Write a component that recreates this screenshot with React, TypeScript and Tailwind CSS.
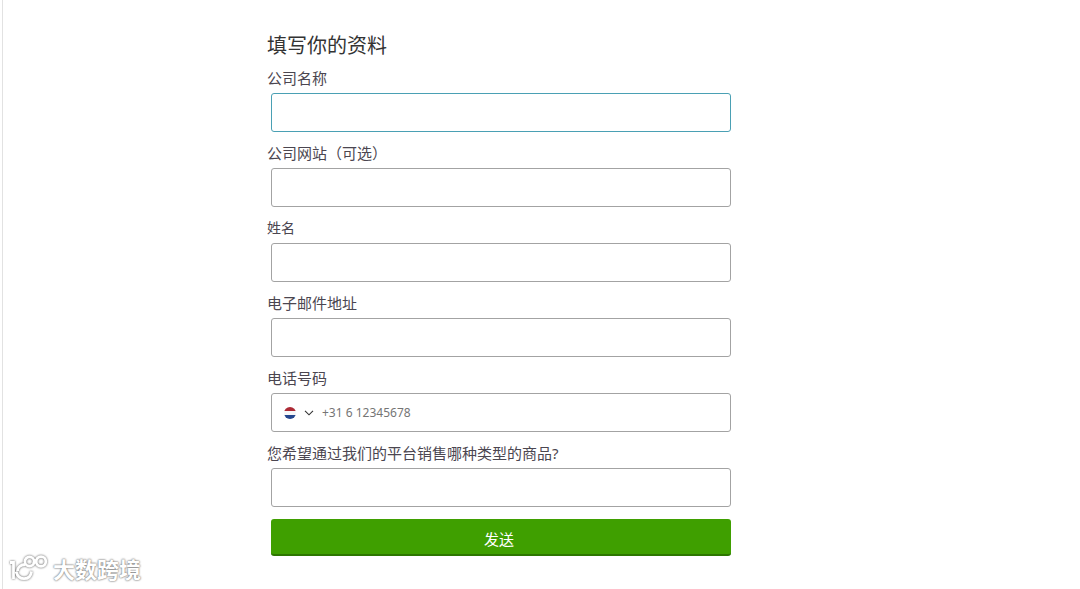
import { useState } from "react";

const cjk = "font-['Noto_Sans','Noto_Sans_CJK_SC',sans-serif]";

const inputClass =
  "block h-[39px] w-full rounded-[3px] border bg-white px-3 text-[15px] text-[#333] outline-none focus:border-[#4aa0b4]";

type FieldProps = {
  id: string;
  label: string;
  small?: boolean;
  active?: boolean;
};

function FieldLabel({ id, label, small }: FieldProps) {
  return (
    <label
      htmlFor={id}
      className={`block pt-[11px] pb-[5px] leading-5 text-[#4b4650] ${small ? "text-[14px]" : "text-[15px]"}`}
    >
      {label}
    </label>
  );
}

function Field(props: FieldProps) {
  return (
    <div>
      <FieldLabel {...props} />
      <div className="pl-1">
        <input
          id={props.id}
          type="text"
          className={`${inputClass} ${props.active ? "border-[#4aa0b4]" : "border-[#a3a3a3]"}`}
        />
      </div>
    </div>
  );
}

function DutchFlag() {
  return (
    <svg viewBox="0 0 12 12" className="size-3" aria-hidden="true">
      <clipPath id="flag">
        <circle cx="6" cy="6" r="6" />
      </clipPath>
      <g clipPath="url(#flag)">
        <rect width="12" height="12" fill="#f7f7f9" />
        <rect width="12" height="4" fill="#ad2a35" />
        <rect y="8" width="12" height="4" fill="#24468e" />
      </g>
    </svg>
  );
}

function PhoneField() {
  const [phone, setPhone] = useState("");
  return (
    <div>
      <FieldLabel id="phone" label="电话号码" />
      <div className="pl-1">
        <div className="flex h-[39px] items-center rounded-[3px] border border-[#a3a3a3] bg-white pl-3">
          <button type="button" aria-label="NL +31" className="flex items-center gap-2">
            <DutchFlag />
            <svg viewBox="0 0 10 6" className="h-1.5 w-2.5" fill="none" stroke="#333" aria-hidden="true">
              <path d="M1 0.8 5 4.8 9 0.8" strokeWidth="1.1" />
            </svg>
          </button>
          <input
            id="phone"
            type="tel"
            value={phone}
            onChange={(e) => setPhone(e.target.value)}
            placeholder="+31 6 12345678"
            className="ml-2 min-w-0 flex-1 font-['Noto_Sans',sans-serif] text-[12px] text-[#333] outline-none placeholder:text-[#757575]"
          />
        </div>
      </div>
    </div>
  );
}

function Watermark() {
  return (
    <div className="absolute bottom-1 left-1.5 flex items-center gap-1">
      <svg
        viewBox="0 0 40 32"
        className="h-8 w-10 drop-shadow-[0_0_1px_#555]"
        fill="none"
        stroke="#fff"
        strokeWidth="2.8"
        aria-hidden="true"
      >
        <path d="M1 9.5H4.500V26" />
        <path d="M16 11.500C11.500 11.500 8.500 14.500 8.500 18" />
        <path d="M7 18.500C8.500 23.500 11.500 25.700 15 25.700C19.500 25.700 22 22.500 22.500 18.500" />
        <circle cx="20.500" cy="8.500" r="4.600" />
        <circle cx="32" cy="8.500" r="4.800" />
        <path d="M24.500 10.500 27.500 7" />
      </svg>
      <span className="text-[22px] leading-8 font-bold text-white [text-shadow:0_0_2px_#777,0_0_2px_#888]">
        大数跨境
      </span>
    </div>
  );
}

export default function App() {
  return (
    <main className={`relative ml-0.5 min-h-screen border-l border-[#e2e2e2] bg-white pt-[34px] pr-[85px] ${cjk}`}>
      <form className="mx-auto max-w-[464px]" onSubmit={(e) => e.preventDefault()}>
        <h1 className="text-[20px] leading-[23px] text-[#333]">填写你的资料</h1>
        <Field id="company" label="公司名称" active />
        <Field id="website" label="公司网站（可选）" />
        <Field id="name" label="姓名" small />
        <Field id="email" label="电子邮件地址" />
        <PhoneField />
        <Field id="goods" label="您希望通过我们的平台销售哪种类型的商品?" />
        <div className="pt-3 pl-1">
          <button
            type="submit"
            className="block h-[37px] w-full rounded-[3px] border-b-2 border-[#2d7600] bg-[#3f9f00] pt-1 pr-1 text-[15px] leading-5 text-white"
          >
            发送
          </button>
        </div>
      </form>
      <Watermark />
    </main>
  );
}
